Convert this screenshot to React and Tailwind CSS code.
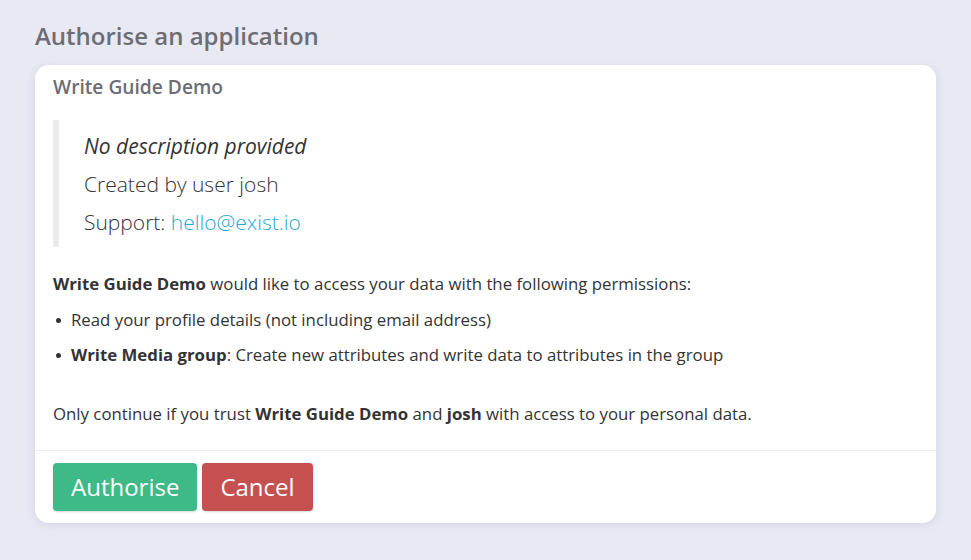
import React from 'react'

function Bullet({ children }) {
  return (
    <li className="flex items-center">
      <span className="w-[5px] h-[5px] rounded-full bg-[#333] ml-[3px] mr-[10px] shrink-0" />
      <span>{children}</span>
    </li>
  )
}

function App() {
  return (
    <div className="min-h-[560px] bg-[#e9e9f3] px-[35px] pt-[20px] pb-[37px] text-[#333] font-['Open_Sans',sans-serif]">
      <h1 className="text-[24px] leading-[32px] font-semibold text-[#6c6d75] mb-[13px]">Authorise an application</h1>

      <div className="bg-white rounded-[14px] shadow-[0_2px_10px_rgba(120,120,170,0.18)] overflow-hidden">
        <div className="px-[18px] pt-[10px] pb-[24px]">
          <h2 className="text-[19.2px] leading-[24px] font-semibold text-[#6c6d75] mb-[21px]">Write Guide Demo</h2>

          {/* App details */}
          <div className="border-l-[6px] border-[#ebebeb] pl-[25px] pt-[7px] pb-[6px] mb-[25px] text-[21px] leading-[38px] font-light">
            <p className="italic font-normal">No description provided</p>
            <p>Created by user josh</p>
            <p>
              Support: <span className="text-[#1fa8d4]">hello@exist.io</span>
            </p>
          </div>

          <p className="text-[16.8px] leading-[24px] mb-[12px]">
            <b>Write Guide Demo</b> would like to access your data with the following permissions:
          </p>
          <ul className="text-[16.8px] leading-[24px] space-y-[11px] mb-[35px]">
            <Bullet>Read your profile details (not including email address)</Bullet>
            <Bullet>
              <b>Write Media group</b>: Create new attributes and write data to attributes in the group
            </Bullet>
          </ul>
          <p className="text-[16.8px] leading-[24px]">
            Only continue if you trust <b>Write Guide Demo</b> and <b>josh</b> with access to your personal data.
          </p>
        </div>

        <div className="border-t border-[#ebebf3] px-[18px] pt-[12px] pb-[12px] flex gap-[5px]">
          <button className="h-[48px] px-[18px] rounded-[4px] bg-[#3dba87] text-white text-[24px] shadow-[0_1px_2px_rgba(0,0,0,0.15)]">Authorise</button>
          <button className="h-[48px] px-[18px] rounded-[4px] bg-[#c45050] text-white text-[24px] shadow-[0_1px_2px_rgba(0,0,0,0.15)]">Cancel</button>
        </div>
      </div>
    </div>
  )
}

export default App
